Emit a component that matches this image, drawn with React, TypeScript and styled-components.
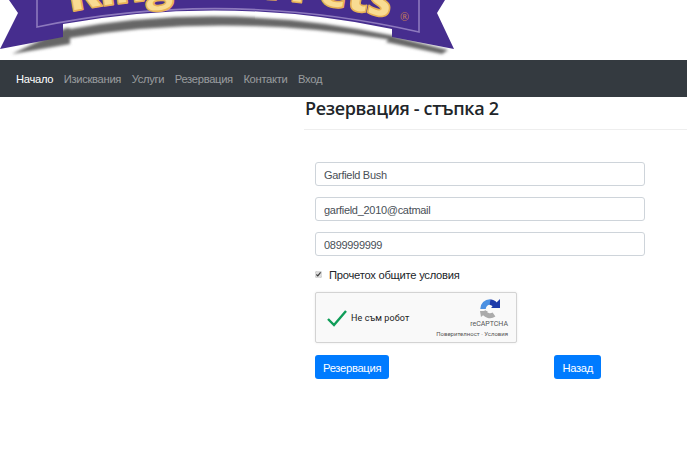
import React from 'react'
import styled, { createGlobalStyle } from 'styled-components'

const GlobalStyle = createGlobalStyle`
  html, body {
    margin: 0;
    padding: 0;
    background: #fff;
    font-family: 'Liberation Sans', Arial, sans-serif;
  }
  * { box-sizing: border-box; }
`

const Page = styled.div`
  width: 687px;
  height: 465px;
  overflow: hidden;
  background: #fff;
`

const LogoBar = styled.div`
  height: 60px;
  overflow: hidden;
`

const Navbar = styled.nav`
  height: 37px;
  background: #343a40;
  display: flex;
  align-items: center;
  gap: 10.5px;
  padding-left: 16px;
`

const NavLink = styled.a<{ $active?: boolean }>`
  font-size: 11.2px;
  letter-spacing: -0.3px;
  color: ${({ $active }) => ($active ? '#fff' : 'rgba(255,255,255,.5)')};
`

const Main = styled.main`
  display: grid;
  grid-template-columns: 304px 1fr;
`

const Content = styled.section``

const Heading = styled.h2`
  margin: 0;
  height: 33px;
  padding: 0 0 0 1px;
  border-bottom: 1px solid #eee;
  font-family: 'Open Sans', sans-serif;
  font-size: 18px;
  line-height: 23px;
  font-weight: 600;
  letter-spacing: -0.35px;
  color: #212529;
`

const Form = styled.form`
  width: 330px;
  margin: 32px 0 0 11px;
  display: flex;
  flex-direction: column;
`

const Input = styled.input`
  width: 100%;
  height: 24px;
  margin-bottom: 11px;
  padding: 1px 8px 0;
  border: 1px solid #ced4da;
  border-radius: 3px;
  font-family: 'Liberation Sans', sans-serif;
  font-size: 11px;
  letter-spacing: -0.3px;
  color: #495057;
  background: #fff;
`

const TermsRow = styled.label`
  display: flex;
  align-items: center;
  gap: 7px;
  height: 16px;
  margin-top: -1px;
  padding-top: 1px;
  font-size: 11.2px;
  letter-spacing: -0.25px;
  color: #212529;
`

const TermsCheck = styled.input`
  width: 7px;
  height: 7px;
  margin: 0;
  accent-color: #dcdcdc;
`

const Captcha = styled.div`
  width: 202px;
  height: 51px;
  margin-top: 10px;
  padding: 0 8px 0 11px;
  display: flex;
  align-items: center;
  justify-content: space-between;
  border: 1px solid #d3d3d3;
  border-radius: 2px;
  background: #f9f9f9;
  box-shadow: 0 0 3px rgba(0,0,0,.08);
`

const CaptchaLeft = styled.div`
  display: flex;
  align-items: center;
  gap: 4px;
  font-family: Roboto, sans-serif;
  font-size: 9px;
  letter-spacing: 0.1px;
  color: #222;
`

const CaptchaBrand = styled.div`
  display: flex;
  flex-direction: column;
  align-items: flex-end;
  font-family: Roboto, sans-serif;
  font-size: 7px;
  color: #555;
`

const CaptchaMarkSlot = styled.div`
  align-self: flex-end;
  margin: 0 8px 1px 0;
  height: 20px;
`

const CaptchaLinks = styled.span`
  font-size: 6px;
  margin-top: 2px;
  white-space: nowrap;
`

const Actions = styled.div`
  width: 286px;
  margin-top: 12px;
  display: flex;
  justify-content: space-between;
`

const Button = styled.button`
  height: 24px;
  padding: 1px 8px 0;
  border: 0;
  border-radius: 3px;
  background: #007bff;
  color: #fff;
  font-family: 'Liberation Sans', sans-serif;
  font-size: 11.2px;
  letter-spacing: -0.3px;
`

const Logo = () => (
  <svg width="460" height="60" viewBox="0 0 460 60">
    <defs>
      <filter id="blur" x="-10%" y="-30%" width="120%" height="160%"><feGaussianBlur stdDeviation="1.8" /></filter>
      <path id="arc" d="M70 12 Q230 -20 392 19" />
    </defs>
    <g filter="url(#blur)" fill="#666">
      <path d="M64 30 Q225 0 395 36 L386 44 L392 40 Q225 12 70 38 Z" />
      <path d="M392 36 L448 50 L442 54 L386 42 Z" />
      <path d="M66 28 L70 28 L70 44 L12 54 Z" />
    </g>
    <path d="M9 0 L18 13 L0 49 L63 37 L63 24 Q226 -5.5 392 29 L392 37 L454 49 L437 13 L445 0 Z" fill="#462d8e" />
    <path d="M37 0 L37 27 Q225 -12 419 32 L419 0" fill="none" stroke="#8d79bd" strokeWidth="1.6" />
    <text fontFamily="'Open Sans', sans-serif" fontWeight="800" fontSize="48" fill="#f9dc92" stroke="#e8b256" strokeWidth="1.6" strokeLinejoin="round">
      <textPath href="#arc" textLength="322" lengthAdjust="spacing">Kingdom Pets</textPath>
    </text>
    <text x="400" y="21" fontFamily="'Open Sans', sans-serif" fontSize="11" fill="#c47a5a">®</text>
  </svg>
)

const RecaptchaMark = () => (
  <svg width="20" height="20" viewBox="0 0 20 20" fill="none">
    <path d="M3.5 12 A7 7 0 0 0 14 15.5" stroke="#ababab" strokeWidth="5" />
    <path d="M0 12 L8 12 L1 18 Z" fill="#ababab" />
    <path d="M3 10 A7 7 0 0 1 10 3" stroke="#4a90e2" strokeWidth="5.5" />
    <path d="M10 3 A7 7 0 0 1 16 8" stroke="#1c3aa9" strokeWidth="5.5" />
    <path d="M11 9 L20 9 L20 0 Z" fill="#1c3aa9" />
  </svg>
)

export default function App() {
  return (
    <Page>
      <GlobalStyle />
      <LogoBar><Logo /></LogoBar>
      <Navbar>
        <NavLink $active>Начало</NavLink>
        <NavLink>Изисквания</NavLink>
        <NavLink>Услуги</NavLink>
        <NavLink>Резервация</NavLink>
        <NavLink>Контакти</NavLink>
        <NavLink>Вход</NavLink>
      </Navbar>
      <Main>
        <div />
        <Content>
          <Heading>Резервация - стъпка 2</Heading>
          <Form>
            <Input defaultValue="Garfield Bush" />
            <Input defaultValue="garfield_2010@catmail" />
            <Input defaultValue="0899999999" />
            <TermsRow>
              <TermsCheck type="checkbox" defaultChecked />
              Прочетох общите условия
            </TermsRow>
            <Captcha>
              <CaptchaLeft>
                <svg width="20" height="18" viewBox="0 0 20 18">
                  <path d="M1 10 L7 16 L19 2" fill="none" stroke="#0f9d58" strokeWidth="2.4" />
                </svg>
                Не съм робот
              </CaptchaLeft>
              <CaptchaBrand>
                <CaptchaMarkSlot><RecaptchaMark /></CaptchaMarkSlot>
                <span>reCAPTCHA</span>
                <CaptchaLinks>Поверителност · Условия</CaptchaLinks>
              </CaptchaBrand>
            </Captcha>
            <Actions>
              <Button type="button">Резервация</Button>
              <Button type="button">Назад</Button>
            </Actions>
          </Form>
        </Content>
      </Main>
    </Page>
  )
}
